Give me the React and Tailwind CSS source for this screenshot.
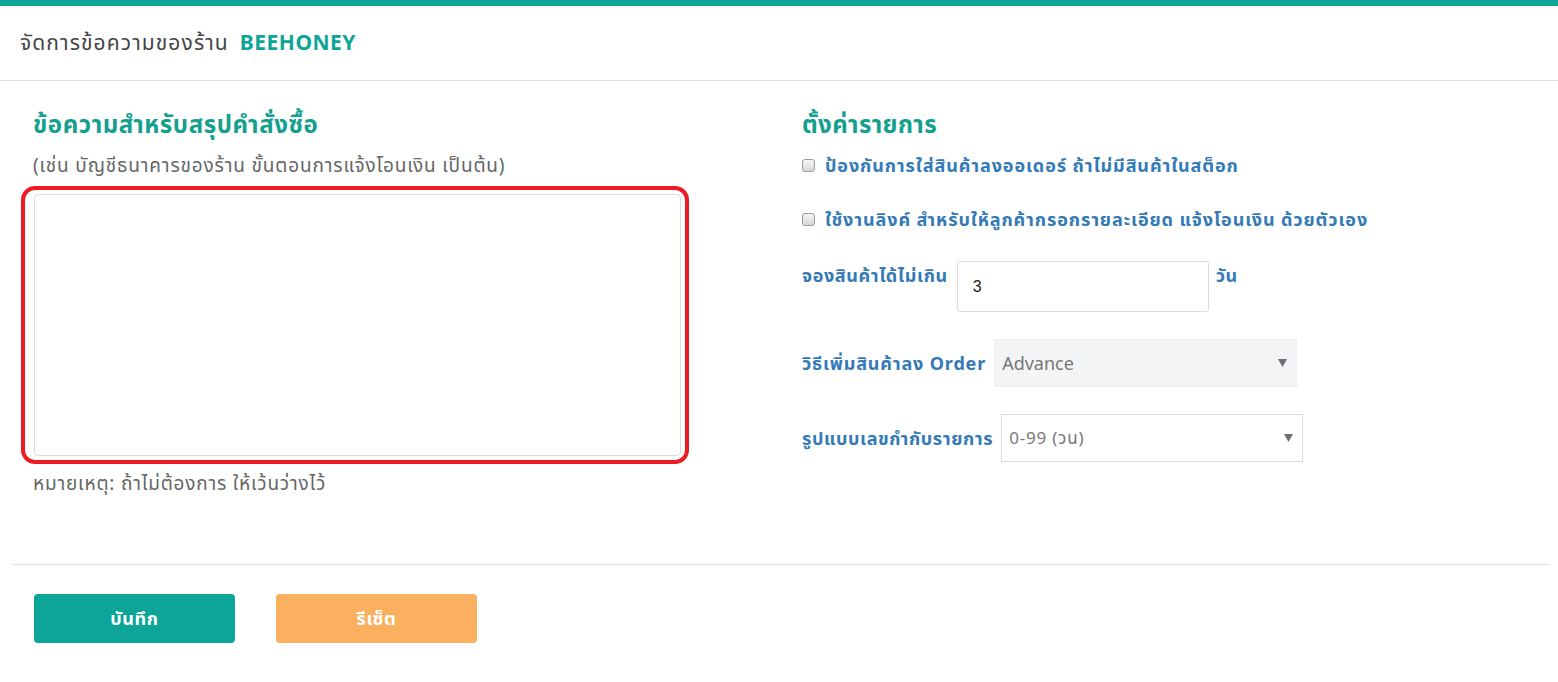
import React from "react";

const FONT = { fontFamily: '"Noto Sans", "Noto Sans Thai", "Open Sans", sans-serif' };

function Checkbox() {
  return (
    <span className="inline-block w-[13px] h-[13px] shrink-0 rounded-[3px] border border-[#9a9a9a] bg-gradient-to-b from-[#f6f6f6] to-[#d6d6d6] shadow-[inset_0_0_1px_rgba(255,255,255,0.9)]" />
  );
}

function Arrow() {
  return (
    <svg width="9" height="8" viewBox="0 0 9 8" className="shrink-0">
      <path d="M0 0 H9 L4.5 8 Z" fill="#6b6f76" />
    </svg>
  );
}

const label = "text-[18px] font-bold text-[#337ab7] leading-[24px] tracking-[0.6px]";
const cbLabel = "text-[18px] font-bold text-[#337ab7] leading-[24px] tracking-[0.9px]";

export default function App() {
  return (
    <div className="w-[1558px] h-[682px] bg-white overflow-hidden" style={FONT}>
      <div className="h-[6px] bg-[#0ca597]" />
      <div className="h-[75px] flex items-center pl-[20px] border-b border-[#dedede]">
        <span className="text-[21px] text-[#444] tracking-[1.1px]">จัดการข้อความของร้าน</span>
        <span className="text-[21px] text-[#0ca597] font-bold ml-[11px] tracking-[0.5px]">BEEHONEY</span>
      </div>

      <div className="flex pl-[33px] pt-[26px] h-[483px]">
        <div className="w-[648px] flex flex-col">
          <h2 className="text-[24px] font-bold text-[#13a08f] leading-[34px] tracking-[0.6px]">ข้อความสำหรับสรุปคำสั่งซื้อ</h2>
          <p className="mt-[12px] text-[19px] text-[#666] leading-[24px] tracking-[0.85px]">(เช่น บัญชีธนาคารของร้าน ขั้นตอนการแจ้งโอนเงิน เป็นต้น)</p>
          <div className="relative mt-[17px] ml-[1px] w-[647px] h-[262px]">
            <textarea className="w-full h-full border border-[#dcdcdc] rounded-[4px] resize-none outline-none p-2" />
            <div className="absolute -left-[13px] -right-[8px] -top-[8px] -bottom-[8px] border-[4px] border-[#ed1c24] rounded-[14px] pointer-events-none" />
          </div>
          <p className="mt-[15px] text-[19px] text-[#666] leading-[24px] tracking-[0.8px]">หมายเหตุ: ถ้าไม่ต้องการ ให้เว้นว่างไว้</p>
        </div>

        <div className="ml-[121px] flex flex-col">
          <h2 className="text-[24px] font-bold text-[#13a08f] leading-[34px] tracking-[0.4px]">ตั้งค่ารายการ</h2>
          <div className="mt-[12px] flex items-center gap-[10px]">
            <Checkbox />
            <span className={cbLabel}>ป้องกันการใส่สินค้าลงออเดอร์ ถ้าไม่มีสินค้าในสต็อก</span>
          </div>
          <div className="mt-[30px] flex items-center gap-[10px]">
            <Checkbox />
            <span className={cbLabel}>ใช้งานลิงค์ สำหรับให้ลูกค้ากรอกรายละเอียด แจ้งโอนเงิน ด้วยตัวเอง</span>
          </div>
          <div className="mt-[30px] flex items-start">
            <span className={label + " mt-[2px]"}>จองสินค้าได้ไม่เกิน</span>
            <div className="ml-[9px] w-[252px] h-[51px] border border-[#dcdcdc] rounded-[3px] flex items-center pl-[15px] text-[16px] text-[#222]" style={{ fontFamily: '"Liberation Sans", Arial, sans-serif' }}>3</div>
            <span className={label + " ml-[7px] mt-[2px]"}>วัน</span>
          </div>
          <div className="mt-[27px] flex items-center">
            <span className="text-[18px] font-bold text-[#337ab7] leading-[24px] tracking-[0.85px]">วิธีเพิ่มสินค้าลง Order</span>
            <div className="ml-[8px] w-[303px] h-[48px] bg-[#f3f4f6] border border-[#eeeff1] flex items-center justify-between pl-[7px] pr-[9px] text-[18px] text-[#777]">
              <span>Advance</span>
              <Arrow />
            </div>
          </div>
          <div className="mt-[27px] flex items-center">
            <span className={label}>รูปแบบเลขกำกับรายการ</span>
            <div className="ml-[8px] w-[302px] h-[48px] bg-white border border-[#dcdcdc] flex items-center justify-between pl-[7px] pr-[9px] text-[17px] text-[#777] tracking-[0.8px]">
              <span>0-99 (วน)</span>
              <Arrow />
            </div>
          </div>
        </div>
      </div>

      <div className="ml-[13px] mr-[8px] border-t border-[#dedede]" />
      <div className="flex pl-[34px] pt-[29px] gap-[41px]">
        <button className="w-[201px] h-[49px] rounded-[4px] bg-[#0ca597] text-white text-[18px] font-bold tracking-[0.6px]">บันทึก</button>
        <button className="w-[201px] h-[49px] rounded-[4px] bg-[#fab05e] text-white text-[18px] font-bold tracking-[0.6px]">รีเซ็ต</button>
      </div>
    </div>
  );
}
